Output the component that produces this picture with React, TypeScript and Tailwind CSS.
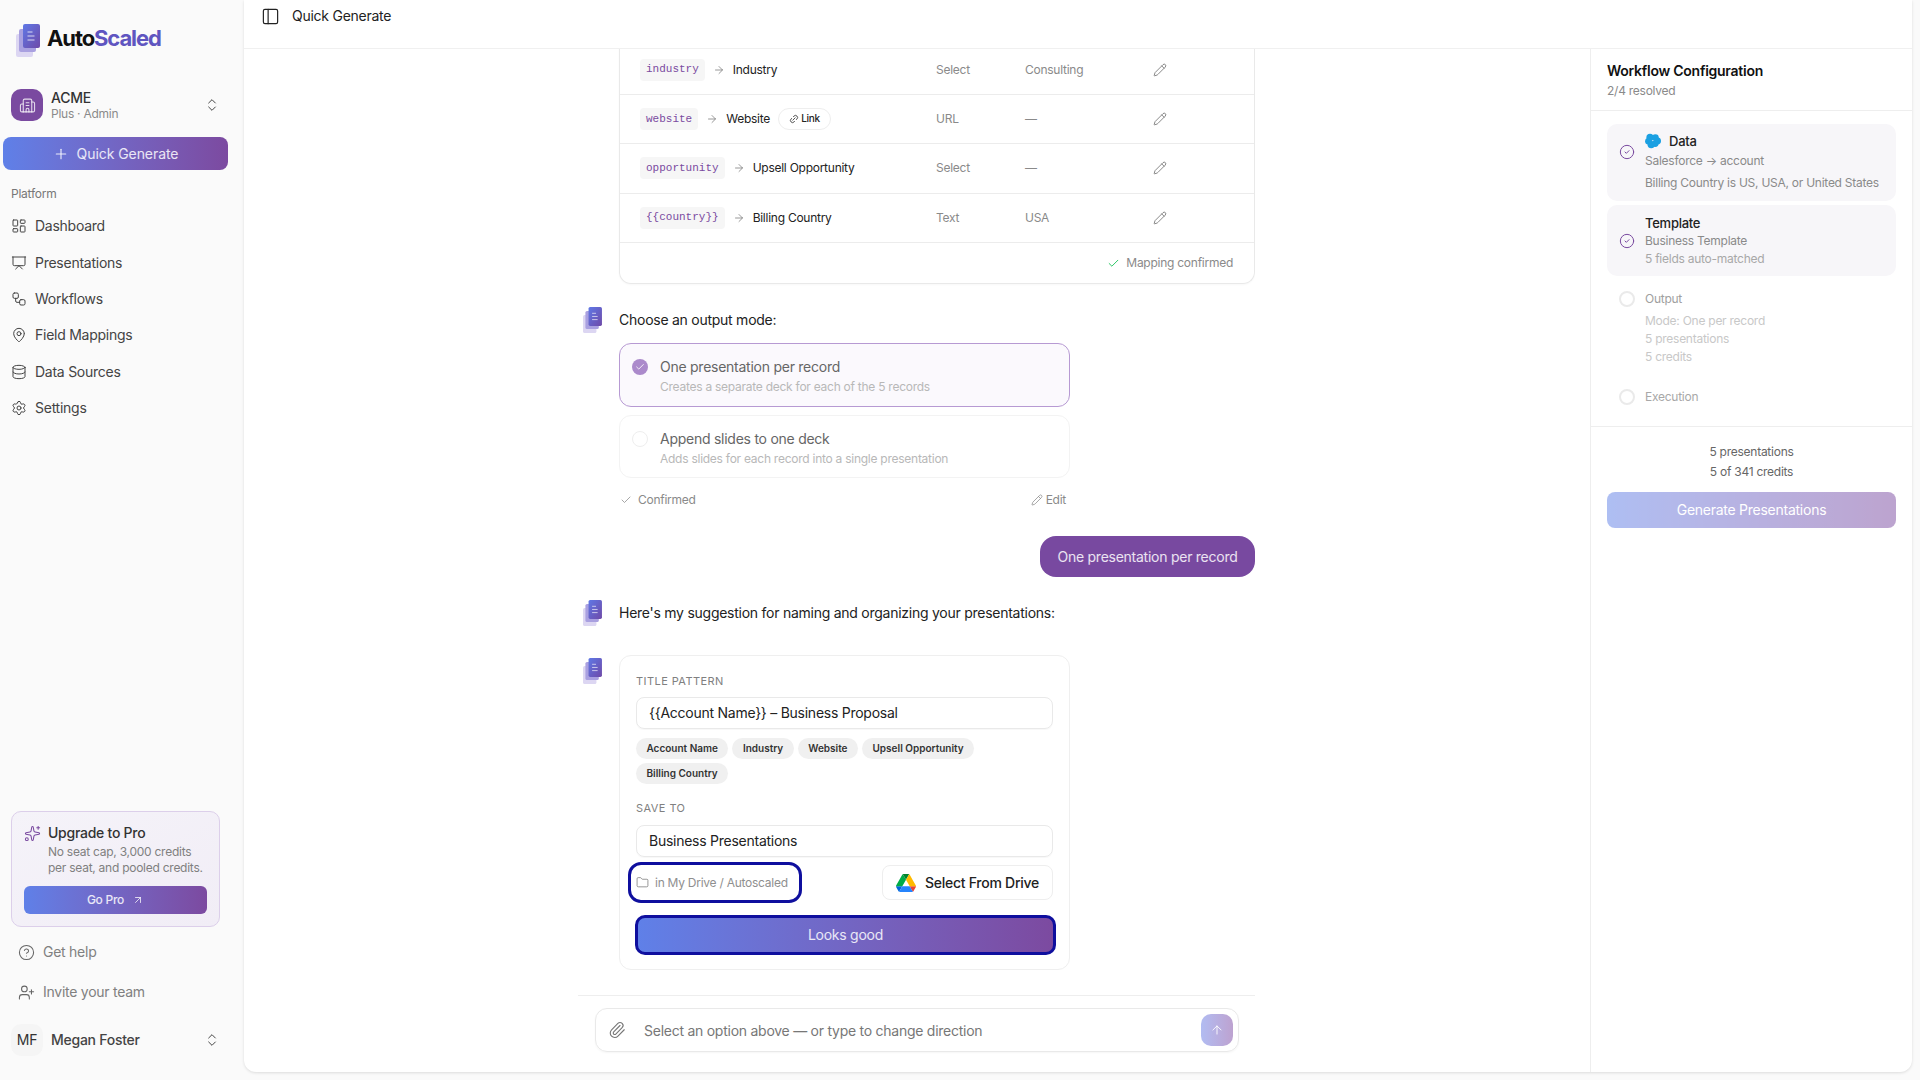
import {
  ArrowRight,
  ArrowUp,
  ArrowUpRight,
  Building2,
  Check,
  ChevronsUpDown,
  CircleCheck,
  CircleHelp,
  Database,
  Folder,
  LayoutDashboard,
  Link2,
  MapPin,
  PanelLeft,
  Paperclip,
  Pencil,
  Plus,
  Presentation,
  Settings,
  Sparkles,
  UserPlus,
  Workflow,
} from 'lucide-react';

const NAV_ITEMS = [
  { label: 'Dashboard', icon: LayoutDashboard },
  { label: 'Presentations', icon: Presentation },
  { label: 'Workflows', icon: Workflow },
  { label: 'Field Mappings', icon: MapPin },
  { label: 'Data Sources', icon: Database },
  { label: 'Settings', icon: Settings },
];

const MAPPING_ROWS = [
  { token: 'industry', name: 'Industry', type: 'Select', value: 'Consulting', link: false },
  { token: 'website', name: 'Website', type: 'URL', value: '—', link: true },
  { token: 'opportunity', name: 'Upsell Opportunity', type: 'Select', value: '—', link: false },
  { token: '{{country}}', name: 'Billing Country', type: 'Text', value: 'USA', link: false },
];

const FIELD_CHIPS = ['Account Name', 'Industry', 'Website', 'Upsell Opportunity', 'Billing Country'];

function LogoMark({ className }: { className: string }) {
  return (
    <svg viewBox="0 0 24 33" className={className} aria-hidden="true">
      <defs>
        <linearGradient id="logo-front" x1="0" y1="0" x2="1" y2="1">
          <stop offset="0" stopColor="#5f78e6" />
          <stop offset="1" stopColor="#6f4aa8" />
        </linearGradient>
      </defs>
      <rect x="0" y="10" width="17" height="23" rx="2" fill="#dcd6f2" />
      <rect x="3" y="5" width="17" height="23" rx="2" fill="#a9a0e0" />
      <rect x="7" y="0" width="17" height="24" rx="2" fill="url(#logo-front)" />
      <path d="M11.5 8h5M11.5 12h7M11.5 16h7" stroke="#fff" strokeOpacity="0.75" strokeWidth="1.1" />
    </svg>
  );
}

function SalesforceCloud() {
  return (
    <svg viewBox="0 0 16 16" className="mb-[3px] h-[16px] w-[16px]" aria-hidden="true">
      <g fill="#1ba0e2">
        <circle cx="5" cy="4.4" r="3.6" />
        <circle cx="10.4" cy="4.6" r="3.4" />
        <circle cx="12.6" cy="8" r="3.4" />
        <circle cx="3.4" cy="8.2" r="3.3" />
        <circle cx="6.2" cy="11.6" r="3.7" />
        <circle cx="10.2" cy="10.6" r="3.4" />
      </g>
    </svg>
  );
}

function DriveLogo() {
  return (
    <svg viewBox="0 0 87.3 78" className="h-[18px] w-[20px]" aria-hidden="true">
      <path d="m6.6 66.85 3.85 6.65c.8 1.4 1.95 2.5 3.3 3.3l13.75-23.8h-27.5c0 1.55.4 3.1 1.2 4.5z" fill="#0066da" />
      <path d="m43.65 25-13.75-23.8c-1.35.8-2.5 1.9-3.3 3.3l-25.4 44a9.06 9.06 0 0 0 -1.2 4.5h27.5z" fill="#00ac47" />
      <path d="m73.55 76.8c1.35-.8 2.5-1.9 3.3-3.3l1.6-2.75 7.65-13.25c.8-1.4 1.2-2.95 1.2-4.5h-27.502l5.852 11.5z" fill="#ea4335" />
      <path d="m43.65 25 13.75-23.8c-1.35-.8-2.9-1.2-4.5-1.2h-18.5c-1.6 0-3.15.45-4.5 1.2z" fill="#00832d" />
      <path d="m59.8 53h-32.3l-13.75 23.8c1.35.8 2.9 1.2 4.5 1.2h50.8c1.6 0 3.15-.45 4.5-1.2z" fill="#2684fc" />
      <path d="m73.4 26.5-12.7-22c-.8-1.4-1.95-2.5-3.3-3.3l-13.75 23.8 16.15 28h27.45c0-1.55-.4-3.1-1.2-4.5z" fill="#ffba00" />
    </svg>
  );
}

function Sidebar() {
  return (
    <aside className="flex h-full w-[244px] shrink-0 flex-col">
      <div className="flex h-[57px] items-end pl-4">
        <LogoMark className="h-[33px] w-[24px]" />
        <span className="mb-[5px] ml-[7px] text-[22px] leading-7 font-bold tracking-[-0.05em] text-[#111]">
          Auto<span className="text-[#5f55c0]">Scaled</span>
        </span>
      </div>

      <div className="mt-[32px] flex h-[32px] items-center pl-[11px]">
        <div className="flex h-[32px] w-[32px] items-center justify-center rounded-[10px] bg-[#7a4aa0]">
          <Building2 className="h-[17px] w-[17px] text-white/80" strokeWidth={1.5} />
        </div>
        <div className="ml-2 flex flex-col">
          <span className="text-sm leading-[17px] font-medium text-[#333]">ACME</span>
          <span className="text-xs leading-[15px] text-[#8a8a8a]">Plus · Admin</span>
        </div>
        <ChevronsUpDown className="mr-[24px] ml-auto h-4 w-4 text-[#444]" strokeWidth={1.5} />
      </div>

      <div className="mt-4 mr-4 ml-[3px] flex h-[33px] items-center justify-center gap-2 rounded-lg bg-gradient-to-r from-[#5f80e8] to-[#7c4aa0] text-sm tracking-[-0.005em] text-white/85">
        <Plus className="h-4 w-4" strokeWidth={1.75} />
        Quick Generate
      </div>

      <div className="mt-4 pl-[11px] text-xs leading-[16px] text-[#777]">Platform</div>

      <nav className="mt-[6px] flex flex-col">
        {NAV_ITEMS.map(({ label, icon: Icon }) => (
          <div key={label} className="flex h-[36.4px] items-center gap-[8px] pl-[11px] text-sm text-[#444]">
            <Icon className="h-4 w-4" strokeWidth={1.5} />
            {label}
          </div>
        ))}
      </nav>

      <div className="mt-auto ml-[11px] w-[209px] rounded-[10px] border border-[#dccfea] bg-gradient-to-br from-[#f5f3f9] to-[#f1edf6] px-[12px] pt-[11px] pb-[12px]">
        <div className="flex items-start">
          <Sparkles className="mt-[2px] h-[17px] w-[17px] shrink-0 text-[#7a4aa0]" strokeWidth={1.5} />
          <div className="ml-[7px]">
            <div className="text-sm leading-[20px] font-medium text-[#333]">Upgrade to Pro</div>
            <div className="mt-px text-xs leading-[16px] whitespace-nowrap text-[#808080]">
              No seat cap, 3,000 credits
              <br />
              per seat, and pooled credits.
            </div>
          </div>
        </div>
        <div className="mt-[10px] flex h-[28px] items-center justify-center gap-2 rounded-md bg-gradient-to-r from-[#5f80e8] to-[#7c4aa0] text-xs font-medium text-white/85">
          Go Pro
          <ArrowUpRight className="h-3 w-3" strokeWidth={1.75} />
        </div>
      </div>

      <div className="mt-[5px] flex h-[40px] items-center gap-[8px] pl-[18px] text-sm text-[#808080]">
        <CircleHelp className="h-[17px] w-[17px] text-[#666]" strokeWidth={1.5} />
        Get help
      </div>
      <div className="flex h-[40px] items-center gap-[8px] pl-[18px] text-sm text-[#808080]">
        <UserPlus className="h-[17px] w-[17px] text-[#666]" strokeWidth={1.5} />
        Invite your team
      </div>

      <div className="mt-[12px] mb-[24px] flex h-[32px] items-center pl-[11px]">
        <div className="flex h-[32px] w-[32px] items-center justify-center rounded-[10px] bg-[#f5f5f5] text-sm text-[#333]">MF</div>
        <span className="ml-2 text-sm font-medium text-[#444]">Megan Foster</span>
        <ChevronsUpDown className="mr-[24px] ml-auto h-4 w-4 text-[#444]" strokeWidth={1.5} />
      </div>
    </aside>
  );
}

function MappingTable() {
  return (
    <div className="ml-[41px] w-[636px] shrink-0 rounded-b-xl border-x border-b border-[#e9e9e9] shadow-[0_1px_2px_rgba(0,0,0,0.03)]">
      {MAPPING_ROWS.map((row) => (
        <div key={row.token} className="flex h-[49.4px] items-center border-b border-[#ececec] pl-[20px] text-xs">
          <div className="flex w-[296px] items-center">
            <span className="flex h-[22px] items-center rounded bg-[#f6f6f6] px-[6px] font-['Liberation_Mono',monospace] text-[11px] tracking-normal text-[#7a4aa0]">
              {row.token}
            </span>
            <ArrowRight className="mx-[8px] h-3 w-3 text-[#777]" strokeWidth={1.5} />
            <span className="text-[#222]">{row.name}</span>
            {row.link && (
              <span className="ml-2 flex h-[22px] w-[53px] items-center justify-center gap-[2px] rounded-full border border-[#eee] text-[10px] font-medium text-[#222]">
                <Link2 className="h-[10px] w-[10px] -rotate-45" strokeWidth={1.75} />
                Link
              </span>
            )}
          </div>
          <span className="w-[89px] text-[#8a8a8a]">{row.type}</span>
          <span className="w-[128px] text-[#8a8a8a]">{row.value}</span>
          <Pencil className="h-[14px] w-[14px] text-[#777]" strokeWidth={1.5} />
        </div>
      ))}
      <div className="flex h-[40px] items-center justify-end gap-[6px] pr-[21px] text-xs text-[#8a8a8a]">
        <Check className="h-[13px] w-[13px] text-[#22c55e]" strokeWidth={1.75} />
        Mapping confirmed
      </div>
    </div>
  );
}

function OutputModes() {
  return (
    <div className="mt-[23px] shrink-0">
      <div className="flex h-[25px] items-center">
        <LogoMark className="ml-[5px] h-[26px] w-[19px]" />
        <span className="ml-[17px] text-sm text-[#222]">Choose an output mode:</span>
      </div>
      <div className="mt-[11px] ml-[41px] w-[451px]">
        <div className="flex h-[64px] rounded-xl border border-[#b79ad3] bg-[#fbf9fd] pt-[13px] pl-[12px]">
          <div className="mt-[2px] flex h-[16px] w-[16px] items-center justify-center rounded-full bg-[#ab8acb]">
            <Check className="h-[10px] w-[10px] text-white" strokeWidth={2} />
          </div>
          <div className="ml-[12px]">
            <div className="text-sm leading-[20px] text-[#666]">One presentation per record</div>
            <div className="text-xs leading-[20px] text-[#b8b8b8]">Creates a separate deck for each of the 5 records</div>
          </div>
        </div>
        <div className="mt-[8px] flex h-[63px] rounded-xl border border-[#f3f3f3] pt-[13px] pl-[12px]">
          <div className="mt-[2px] h-[16px] w-[16px] rounded-full border border-[#eee]" />
          <div className="ml-[12px]">
            <div className="text-sm leading-[20px] text-[#666]">Append slides to one deck</div>
            <div className="text-xs leading-[20px] text-[#b8b8b8]">Adds slides for each record into a single presentation</div>
          </div>
        </div>
        <div className="mt-[13px] flex h-[18px] items-center text-xs text-[#8a8a8a]">
          <Check className="ml-px h-3 w-3" strokeWidth={1.5} />
          <span className="ml-[6px]">Confirmed</span>
          <Pencil className="mr-[3px] ml-auto h-3 w-3" strokeWidth={1.5} />
          <span className="mr-[4px]">Edit</span>
        </div>
      </div>
    </div>
  );
}

function NamingCard() {
  return (
    <div className="mt-[30px] flex shrink-0">
      <LogoMark className="mt-[3px] ml-[5px] h-[26px] w-[19px]" />
      <div className="ml-[17px] h-[315px] w-[451px] rounded-xl border border-[#efefef] px-4 pt-[17px]">
        <div className="text-[11px] leading-[16px] tracking-[0.04em] text-[#808080]">TITLE PATTERN</div>
        <div className="mt-[8px] flex h-[32px] items-center rounded-lg border border-[#e9e9e9] pl-[12px] text-sm text-[#222] shadow-[0_1px_1px_rgba(0,0,0,0.03)]">
          {'{{Account Name}} – Business Proposal'}
        </div>
        <div className="mt-[9px] flex flex-wrap gap-x-[4px] gap-y-[4px]">
          {FIELD_CHIPS.map((chip) => (
            <span key={chip} className="flex h-[21px] items-center rounded-full bg-[#f0f0f0] px-[10.5px] text-[10px] font-semibold tracking-normal text-[#333]">
              {chip}
            </span>
          ))}
        </div>
        <div className="mt-[16px] text-[11px] leading-[16px] tracking-[0.04em] text-[#808080]">SAVE TO</div>
        <div className="mt-[9px] flex h-[32px] items-center rounded-lg border border-[#e9e9e9] pl-[12px] text-sm text-[#222] shadow-[0_1px_1px_rgba(0,0,0,0.03)]">
          Business Presentations
        </div>
        <div className="mt-2 flex items-center justify-between">
          <div className="-ml-[5px] flex h-[35px] w-[168px] items-center gap-[6px] rounded-[10px] pl-[4px] text-xs text-[#8f8f8f] outline-[3px] outline-[#0f0f9e]">
            <Folder className="ml-px h-[13px] w-[13px] text-[#666]" strokeWidth={1.25} />
            in My Drive / Autoscaled
          </div>
          <div className="flex h-[35px] w-[171px] items-center justify-center gap-[9px] rounded-lg border border-[#eee] text-sm font-medium text-[#222]">
            <DriveLogo />
            Select From Drive
          </div>
        </div>
        <div className="mt-[15px] mr-[-3px] ml-[-1px] flex h-[40px] items-center justify-center rounded-[10px] border-[3px] border-[#0f0f9e] bg-gradient-to-r from-[#5f80e8] to-[#7c4aa0] text-sm text-white/85">
          Looks good
        </div>
      </div>
    </div>
  );
}

function ChatColumn() {
  return (
    <section className="flex min-w-0 flex-1 flex-col items-center pr-px">
      <div className="flex min-h-0 w-[677px] flex-1 flex-col justify-end overflow-hidden pb-[25px]">
        <MappingTable />
        <OutputModes />
        <div className="mt-[27px] flex shrink-0 justify-end">
          <div className="flex h-[41px] w-[215px] items-center justify-center rounded-2xl bg-[#7849a0] text-sm text-white/85">
            One presentation per record
          </div>
        </div>
        <div className="mt-[23px] flex h-[25px] shrink-0 items-center">
          <LogoMark className="ml-[5px] h-[26px] w-[19px]" />
          <span className="ml-[17px] text-sm text-[#222]">Here's my suggestion for naming and organizing your presentations:</span>
        </div>
        <NamingCard />
      </div>
      <div className="h-[77px] w-[677px] border-t border-[#eee] pt-[12px]">
        <div className="ml-[17px] flex h-[44px] w-[644px] items-center rounded-xl border border-[#e9e9e9] pr-[5px] pl-[12px] shadow-[0_1px_2px_rgba(0,0,0,0.04)]">
          <Paperclip className="h-[18px] w-[18px] text-[#777]" strokeWidth={1.5} />
          <span className="mt-px ml-[18px] text-sm text-[#777]">Select an option above — or type to change direction</span>
          <div className="ml-auto flex h-[32px] w-[32px] items-center justify-center rounded-[10px] bg-gradient-to-r from-[#b1bcf2] to-[#bda2d0]">
            <ArrowUp className="h-[14px] w-[14px] text-white" strokeWidth={1.5} />
          </div>
        </div>
      </div>
    </section>
  );
}

function ConfigPanel() {
  return (
    <aside className="flex w-[322px] shrink-0 flex-col border-l border-[#eee]">
      <div className="h-[62px] border-b border-[#eee] pt-[12px] pl-4">
        <div className="text-sm leading-5 font-semibold text-[#111]">Workflow Configuration</div>
        <div className="text-xs leading-[20px] text-[#8a8a8a]">2/4 resolved</div>
      </div>
      <div className="h-[316px] border-b border-[#eee] pt-[13px] pr-[16px] pl-[16px] text-xs">
        <div className="flex h-[77px] items-start rounded-[10px] bg-[#f7f6f9] pl-[12px]">
          <CircleCheck className="mt-[20px] h-[16px] w-[16px] text-[#7a4aa0]" strokeWidth={1.5} />
          <div className="mt-[8px] ml-[10px]">
            <div className="flex h-[20px] items-center gap-[8px] text-[13px] font-medium text-[#222]">
              <SalesforceCloud />
              Data
            </div>
            <div className="leading-[17px] text-[#8a8a8a]">Salesforce → account</div>
            <div className="mt-[5px] leading-[17px] whitespace-nowrap text-[#8a8a8a]">Billing Country is US, USA, or United States</div>
          </div>
        </div>
        <div className="mt-[4px] flex h-[71px] items-center rounded-[10px] bg-[#f7f6f9] pl-[12px]">
          <CircleCheck className="h-[16px] w-[16px] text-[#7a4aa0]" strokeWidth={1.5} />
          <div className="ml-[10px]">
            <div className="text-[13px] leading-[18px] font-medium text-[#222]">Template</div>
            <div className="leading-[18px] text-[#8a8a8a]">Business Template</div>
            <div className="leading-[17px] text-[#a8a8a8]">5 fields auto-matched</div>
          </div>
        </div>
        <div className="mt-[14px] flex pl-[12px]">
          <div className="mt-px h-[16px] w-[16px] rounded-full border-2 border-[#eaeaea]" />
          <div className="ml-[10px]">
            <div className="leading-[18px] text-[#a0a0a0]">Output</div>
            <div className="mt-[4px] leading-[18px] text-[#c8c8c8]">Mode: One per record</div>
            <div className="leading-[18px] text-[#c8c8c8]">5 presentations</div>
            <div className="leading-[18px] text-[#c8c8c8]">5 credits</div>
          </div>
        </div>
        <div className="mt-[22px] flex items-center pl-[12px]">
          <div className="h-[16px] w-[16px] rounded-full border-2 border-[#eaeaea]" />
          <div className="ml-[10px] leading-[18px] text-[#a8a8a8]">Execution</div>
        </div>
      </div>
      <div className="px-4 pt-[15px]">
        <div className="text-center text-xs leading-[20px] text-[#666]">
          5 presentations
          <br />5 of 341 credits
        </div>
        <div className="mt-[10px] flex h-[36px] items-center justify-center rounded-lg bg-gradient-to-r from-[#5f80e8] to-[#7c4aa0] text-sm text-white opacity-50">
          Generate Presentations
        </div>
      </div>
    </aside>
  );
}

export default function App() {
  return (
    <div className="flex h-screen w-screen overflow-hidden bg-[#fafafa] font-['Inter',sans-serif] tracking-[-0.016em]">
      <Sidebar />
      <main className="mr-2 mb-2 flex min-w-0 flex-1 flex-col rounded-b-xl bg-white shadow-[0_1px_3px_rgba(0,0,0,0.12)]">
        <header className="flex h-[49px] shrink-0 items-start gap-[12px] border-b border-[#f0f0f0] pt-[6px] pl-[17px] text-sm leading-5 text-[#222]">
          <PanelLeft className="mt-px h-[19px] w-[19px] text-[#222]" strokeWidth={1.5} />
          Quick Generate
        </header>
        <div className="flex min-h-0 flex-1">
          <ChatColumn />
          <ConfigPanel />
        </div>
      </main>
    </div>
  );
}
